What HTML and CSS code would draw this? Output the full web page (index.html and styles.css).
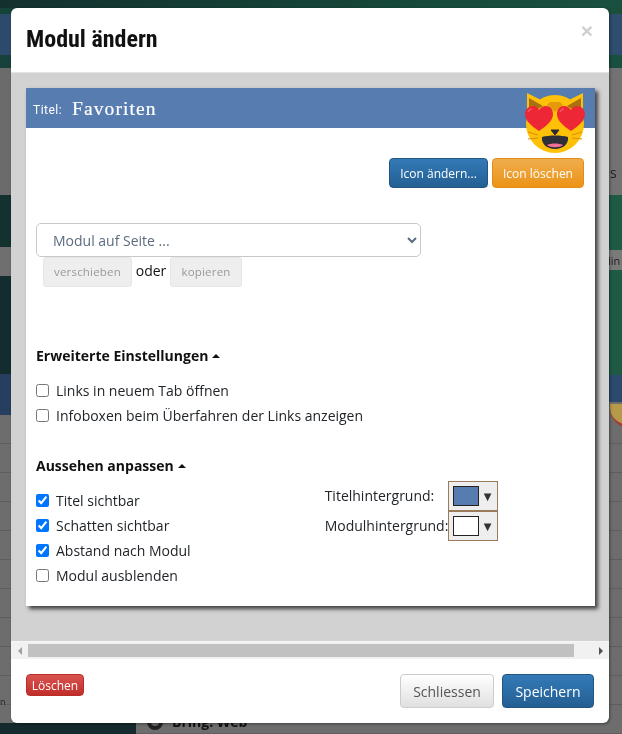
FILE: index.html
```html
<!DOCTYPE html>
<html lang="de">
<head>
<meta charset="utf-8">
<title>Modul ändern</title>
<link rel="stylesheet" href="styles.css">
</head>
<body>
<div class="backdrop" aria-hidden="true">
  <span class="peek peek-s">s</span>
  <span class="peek peek-lin">lin</span>
  <span class="peek peek-n">n</span>
  <span class="bowl"></span>
  <span class="bring"><i class="bring-dot"></i>Bring: Web</span>
</div>
<div class="modal">
  <header class="modal-header">
    <h1 class="modal-title">Modul ändern</h1>
    <span class="close">×</span>
  </header>
  <div class="modal-body">
    <section class="module">
      <div class="titlebar">
        <span class="title-label">Titel:</span>
        <span class="title-value">Favoriten</span>
      </div>
      <svg class="emoji" viewBox="0 0 60 62" aria-hidden="true">
        <path d="M2 1 L22 11 H38 L58 1 V34 H2 Z" fill="#ffc107"/>
        <circle cx="30" cy="32" r="29" fill="#ffc107"/>
        <path d="M4 6 L18 14 L4 22 Z" fill="#a8700f"/>
        <path d="M56 6 L42 14 L56 22 Z" fill="#a8700f"/>
        <path d="M25 10 H35 L38 13 L30 20 L22 13 Z" fill="#e59a0c"/>
        <path d="M3 40 L13 43 M3 47 L13 46 M57 40 L47 43 M57 47 L47 46" stroke="#d98e0a" stroke-width="1" fill="none"/>
        <path d="M14 39 C5 33 0 28 0 22 C0 17 4 14 8 14 C11 14 13 16 14 18 C15 16 18 14 21 14 C25 14 28 17 28 22 C28 28 23 33 14 39 Z" fill="#ee2737"/>
        <path d="M46 39 C37 33 32 28 32 22 C32 17 35 14 39 14 C42 14 45 16 46 18 C47 16 49 14 52 14 C56 14 60 17 60 22 C60 28 55 33 46 39 Z" fill="#ee2737"/>
        <path d="M3 20 C4 18 5 17 7 17 M35 20 C36 18 37 17 39 17" stroke="#f4606c" stroke-width="1.2" fill="none"/>
        <path d="M26 38 H34 L30 43 Z" fill="#2b2b33" stroke="#2b2b33" stroke-linejoin="round"/>
        <path d="M17 45 C24 43 36 43 43 45 C44 52 38 57 30 57 C22 57 16 52 17 45 Z" fill="#2f2f38"/>
        <path d="M22 53 C26 51 34 51 38 53 C35 56 25 56 22 53 Z" fill="#f06f92"/>
      </svg>
      <div class="icon-actions">
        <button class="btn btn-blue">Icon ändern...</button>
        <button class="btn btn-orange">Icon löschen</button>
      </div>
      <div class="move">
        <select class="page-select"><option>Modul auf Seite ...</option></select>
        <div class="move-actions">
          <button class="btn-disabled btn-move">verschieben</button>
          <span class="oder">oder</span>
          <button class="btn-disabled btn-copy">kopieren</button>
        </div>
      </div>
      <h2 class="section-title section-advanced">Erweiterte Einstellungen <i class="caret"></i></h2>
      <div class="checks">
        <label class="check"><input type="checkbox">Links in neuem Tab öffnen</label>
        <label class="check"><input type="checkbox">Infoboxen beim Überfahren der Links anzeigen</label>
      </div>
      <h2 class="section-title section-look">Aussehen anpassen <i class="caret"></i></h2>
      <div class="look">
        <div class="checks">
          <label class="check"><input type="checkbox" checked>Titel sichtbar</label>
          <label class="check"><input type="checkbox" checked>Schatten sichtbar</label>
          <label class="check"><input type="checkbox" checked>Abstand nach Modul</label>
          <label class="check"><input type="checkbox">Modul ausblenden</label>
        </div>
        <div class="colors">
          <div class="color-row">
            <span class="color-label">Titelhintergrund:</span>
            <span class="picker"><i class="swatch swatch-blue"></i><b class="picker-arrow">▼</b></span>
          </div>
          <div class="color-row">
            <span class="color-label">Modulhintergrund:</span>
            <span class="picker"><i class="swatch"></i><b class="picker-arrow">▼</b></span>
          </div>
        </div>
      </div>
    </section>
  </div>
  <div class="hscroll" aria-hidden="true">
    <span class="arrow arrow-left"></span>
    <span class="track"><span class="thumb"></span></span>
    <span class="arrow arrow-right"></span>
  </div>
  <footer class="modal-footer">
    <button class="btn btn-red">Löschen</button>
    <div class="footer-right">
      <button class="btn btn-light">Schliessen</button>
      <button class="btn btn-blue btn-save">Speichern</button>
    </div>
  </footer>
</div>
</body>
</html>
```
FILE: styles.css
```css
* { box-sizing: border-box; }
html, body { margin: 0; height: 100%; overflow: hidden; }
body {
  font-family: "Open Sans", "Liberation Sans", sans-serif;
  font-size: 14px;
  color: #212529;
  background: #6d6d6d;
}
.backdrop {
  position: fixed;
  inset: 0;
  overflow: hidden;
  background:
    linear-gradient(to right, #13302f, #164a3a 70%, #1a5040) 0 0 / 100% 8px no-repeat,
    linear-gradient(#152a2c, #152a2c) 0 100% / 136px 11px no-repeat,
    linear-gradient(to bottom,
      #15433a 0 14px, #2c4a6b 14px 55px, #17413a 55px 68px, #6b6b6b 68px 195px,
      #13312f 195px 247px, #6f6f6f 247px 276px, #132c2d 276px 374px, #263f5f 374px 415px,
      transparent 415px) 0 0 / 311px 100% no-repeat,
    linear-gradient(to bottom,
      #1a4f3c 0 14px, #2f4d6e 14px 55px, #1a5040 55px 68px, #727272 68px 195px,
      #1f5a45 195px 250px, #7a7a7a 250px 270px, #1f5a45 270px 375px, #2c4a6b 375px 402px,
      transparent 402px) 100% 0 / 311px 100% no-repeat,
    repeating-linear-gradient(to bottom, #6d6d6d 0 28px, #5e5e5e 28px 29px) 0 415px;
}
.backdrop .peek, .bring { position: absolute; color: #222; }
.peek-s { left: 610px; top: 163px; font-size: 14px; }
.peek-lin { left: 608px; top: 253px; font-size: 11px; color: #333; }
.peek-n { left: 0; top: 695px; font-size: 9px; }
.bowl {
  position: absolute;
  left: 610px;
  top: 404px;
  width: 40px;
  height: 24px;
  border-radius: 0 0 20px 20px;
  background: #b59a4a;
  border-bottom: 3px solid #a8392f;
}
.bring {
  left: 147px;
  top: 712px;
  font-weight: 700;
  font-size: 14px;
  display: flex;
  align-items: center;
  gap: 9px;
  color: #111;
}
.bring-dot { width: 16px; height: 16px; border-radius: 50%; border: 4px solid #222; }

.modal {
  position: relative;
  width: 598px;
  height: 715px;
  margin: 8px 0 0 11px;
  background: #fff;
  border-radius: 6px;
  overflow: hidden;
  display: flex;
  flex-direction: column;
  box-shadow: 1px 1px 3px rgba(0, 0, 0, .4);
}
.modal-header {
  flex: none;
  height: 65px;
  padding: 15px 16px 0 15px;
  border-bottom: 1px solid #e5e5e5;
  display: flex;
  justify-content: space-between;
}
.modal-title {
  margin: 0;
  font-family: Roboto, "Liberation Sans", sans-serif;
  font-size: 24px;
  line-height: 33px;
  font-weight: 700;
  font-stretch: 75%;
  color: #111;
}
.close {
  font-family: "Liberation Sans", sans-serif;
  font-size: 21px;
  font-weight: 700;
  line-height: 15px;
  color: #cfcfcf;
}
.modal-body {
  flex: 1;
  background: #d2d2d2;
  padding: 15px 14px 0 15px;
  min-height: 0;
}
.module {
  position: relative;
  height: 518px;
  background: #fff;
  box-shadow: 3px 3px 4px #3f3f3f;
}
.titlebar {
  height: 40px;
  background: #567cb0;
  color: #fff;
  display: flex;
  align-items: center;
  padding-left: 7px;
}
.title-label {
  font-family: Roboto, "Liberation Sans", sans-serif;
  font-size: 12px;
  letter-spacing: .5px;
  width: 39px;
  padding-top: 3px;
}
.title-value {
  font-family: "Liberation Serif", serif;
  font-size: 19.5px;
  letter-spacing: 1.1px;
  padding-top: 1px;
  -webkit-text-stroke: .2px #fff;
}
.emoji {
  position: absolute;
  left: 499px;
  top: 4px;
  width: 60px;
  height: 62px;
}
.btn {
  font-family: "Open Sans", sans-serif;
  font-size: 12px;
  border-radius: 4px;
  border: 1px solid;
  padding: 0;
  color: #fff;
  cursor: pointer;
}
.btn-blue {
  background: linear-gradient(#337ab7, #245f93);
  border-color: #245580;
  color: #fff;
}
.btn-orange {
  background: linear-gradient(#f0ad4e, #eb9316);
  border-color: #e38d13;
  color: #fff;
}
.btn-red {
  background: linear-gradient(#d9534f, #c12e2a);
  border-color: #b92c28;
  width: 58px;
  height: 22px;
  font-size: 12px;
}
.btn-light {
  background: linear-gradient(#fff, #e0e0e0);
  border-color: #ccc;
  color: #555;
  width: 94px;
  height: 34px;
  font-size: 14px;
}
.icon-actions {
  display: flex;
  justify-content: flex-end;
  gap: 4px;
  padding: 30px 11px 0 0;
}
.icon-actions .btn { height: 30px; }
.icon-actions .btn-blue { width: 99px; }
.icon-actions .btn-orange { width: 92px; }
.move { padding: 35px 0 0 10px; }
.page-select {
  display: block;
  width: 385px;
  height: 34px;
  padding: 0 12px;
  background: #fff;
  border: 1px solid #c8c8c8;
  border-radius: 5px;
  font-family: "Open Sans", sans-serif;
  font-size: 14px;
  color: #5c6b80;
}
.move-actions {
  display: flex;
  align-items: center;
  padding-left: 7px;
  height: 30px;
}
.btn-disabled {
  height: 30px;
  padding: 0 0 2px;
  background: #eee;
  border: 1px solid #e6e6e6;
  border-radius: 3px;
  font-family: "Open Sans", sans-serif;
  font-size: 11.5px;
  letter-spacing: .2px;
  color: #999;
}
.btn-move { width: 89px; }
.btn-copy { width: 72px; }
.oder { width: 38px; text-align: center; color: #111; margin-top: -3px; }
.section-title {
  margin: 0;
  padding-left: 10px;
  font-size: 14px;
  font-weight: 700;
  line-height: 20px;
  color: #111;
  display: flex;
  align-items: center;
  gap: 4px;
}
.section-advanced { margin-top: 59px; }
.section-look { margin-top: 28px; }
.caret {
  width: 0;
  height: 0;
  border: 4px solid transparent;
  border-top: 0;
  border-bottom: 4px solid #111;
}
.checks { display: flex; flex-direction: column; }
.section-advanced + .checks { margin-top: 12px; padding-left: 10px; }
.check {
  display: flex;
  align-items: center;
  height: 25px;
  color: #212529;
}
.check input { width: 13px; height: 13px; margin: 0 7px 0 0; }
.look {
  display: flex;
  padding: 12px 0 0 10px;
}
.colors { margin-left: 134px; margin-top: -7px; }
.color-row { display: flex; align-items: center; height: 30px; }
.color-label { width: 123px; white-space: nowrap; color: #212529; margin-top: -1px; }
.picker {
  width: 50px;
  height: 30px;
  display: flex;
  align-items: center;
  padding-left: 4px;
  background: #eee;
  border: 1px solid #9a7b5c;
}
.swatch {
  width: 26px;
  height: 20px;
  background: #fff;
  border: 1px solid #222;
}
.swatch-blue { background: #567cb0; }
.picker-arrow {
  flex: 1;
  text-align: center;
  font-family: "DejaVu Sans", sans-serif;
  font-size: 10px;
  font-weight: 400;
  color: #333;
}
.hscroll {
  flex: none;
  height: 18px;
  background: #f1f1f1;
  display: flex;
  align-items: center;
  border-top: 1px solid #f6f6f6;
}
.arrow { width: 17px; height: 100%; display: flex; align-items: center; justify-content: center; }
.arrow::before { content: ""; border: 4px solid transparent; }
.arrow-left::before { border-right: 4px solid #a0a0a0; border-left: 0; }
.arrow-right::before { border-left: 4px solid #505050; border-right: 0; }
.track { flex: 1; height: 13px; }
.thumb { display: block; width: 546px; height: 13px; background: #c1c1c1; }
.modal-footer {
  flex: none;
  height: 64px;
  padding: 15px 15px 0;
  display: flex;
  justify-content: space-between;
  align-items: flex-start;
}
.footer-right { display: flex; gap: 8px; }
.btn-save { width: 92px; height: 34px; font-size: 14px; }
```
